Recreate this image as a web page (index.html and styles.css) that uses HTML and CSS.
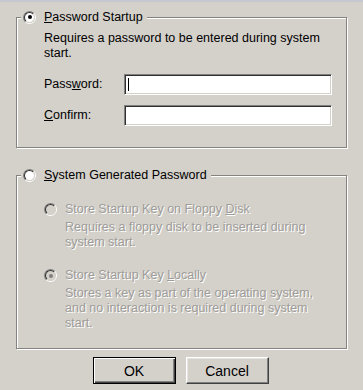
FILE: index.html
```html
<!DOCTYPE html>
<html>
<head>
<meta charset="utf-8">
<link rel="stylesheet" href="styles.css">
</head>
<body>
<div class="topstrip"></div>
<div class="dialog">
  <fieldset class="group g1">
    <legend class="legend">
      <span class="radio checked"><span class="inner"></span></span>
      <span class="ltext"><u>P</u>assword Startup</span>
    </legend>
    <div class="content c1">
      <p class="desc">Requires a password to be entered during system start.</p>
      <div class="row r1">
        <label class="flabel">Pass<u>w</u>ord:</label>
        <div class="input"><span class="caret"></span></div>
      </div>
      <div class="row r2">
        <label class="flabel"><u>C</u>onfirm:</label>
        <div class="input"></div>
      </div>
    </div>
  </fieldset>

  <fieldset class="group g2">
    <legend class="legend">
      <span class="radio"><span class="inner"></span></span>
      <span class="ltext"><u>S</u>ystem Generated Password</span>
    </legend>
    <div class="content c2">
      <div class="option o1">
        <div class="otitle">
          <span class="radio disabled"><span class="inner"></span></span>
          <span class="dis">Store Startup Key on Floppy <u>D</u>isk</span>
        </div>
        <p class="odesc dis">Requires a floppy disk to be inserted during<br>system start.</p>
      </div>
      <div class="option o2">
        <div class="otitle">
          <span class="radio disabled checked"><span class="inner"></span></span>
          <span class="dis">Store Startup Key <u>L</u>ocally</span>
        </div>
        <p class="odesc dis">Stores a key as part of the operating system,<br>and no interaction is required during system<br>start.</p>
      </div>
    </div>
  </fieldset>

  <div class="buttons">
    <button class="btn default">OK</button>
    <button class="btn">Cancel</button>
  </div>
</div>
</body>
</html>
```
FILE: styles.css
```css
html, body {
  margin: 0;
  padding: 0;
  background: #d4d1cb;
  height: 100%;
  overflow: hidden;
}
body {
  font-family: "Liberation Sans", Arial, sans-serif;
  font-size: 12.5px;
  color: #000;
}
.topstrip {
  height: 2px;
  background: #c5c8ce;
}
.dialog {
  padding: 7px 16px 0 16px;
}
.group {
  margin: 0;
  padding: 0;
  min-width: 0;
  border: 1px solid #85837f;
  box-shadow: 1px 1px 0 #fff, inset 1px 1px 0 #fff;
}
.legend {
  display: flex;
  align-items: center;
  margin-left: 4px;
  padding: 0 4px 0 2px;
  height: 16px;
  line-height: 16px;
  background: #d4d1cb;
}
.ltext {
  margin-left: 8px;
}
.radio {
  position: relative;
  display: inline-block;
  width: 13px;
  height: 13px;
  box-sizing: border-box;
  border-radius: 50%;
  border: 1px solid;
  border-color: #808080 #fff #fff #808080;
  flex: none;
}
.radio .inner {
  display: block;
  width: 11px;
  height: 11px;
  box-sizing: border-box;
  border-radius: 50%;
  border: 1px solid;
  border-color: #303030 #d4d1cb #d4d1cb #303030;
  background: #fff;
}
.radio.checked .inner::after {
  content: "";
  position: absolute;
  left: 3.5px;
  top: 3.5px;
  width: 4px;
  height: 4px;
  border-radius: 50%;
  background: #000;
}
.radio.disabled .inner {
  background: #d4d1cb;
}
.radio.disabled.checked .inner::after {
  background: #808080;
}
.content {
  line-height: 15px;
}
.c1 {
  padding: 6px 14px 21px 27px;
}
.desc {
  margin: 0;
  width: 290px;
}
.row {
  display: flex;
  align-items: center;
}
.r1 {
  margin-top: 13px;
}
.r2 {
  margin-top: 10px;
}
.flabel {
  width: 80px;
  flex: none;
}
.input {
  position: relative;
  flex: 1;
  height: 21px;
  box-sizing: border-box;
  background: #fff;
  border: 1px solid;
  border-color: #808080 #fff #fff #808080;
  box-shadow: inset 1px 1px 0 #303030, inset -1px -1px 0 #d4d1cb;
}
.caret {
  position: absolute;
  left: 3px;
  top: 3px;
  width: 1px;
  height: 13px;
  background: #000;
}
.g2 {
  margin-top: 19px;
}
.c2 {
  padding: 19px 14px 17px 27px;
}
.option + .option {
  margin-top: 18px;
}
.otitle {
  display: flex;
  align-items: center;
  height: 15px;
}
.otitle .dis {
  margin-left: 8px;
}
.odesc {
  margin: 3px 0 0 21px;
}
.dis {
  color: #9e9c98;
  text-shadow: 1px 1px 0 #fff;
}
.buttons {
  display: flex;
  justify-content: center;
  gap: 10px;
  margin-top: 8px;
  padding-right: 2px;
}
.btn {
  width: 83px;
  height: 27px;
  box-sizing: border-box;
  font-family: "Liberation Sans", Arial, sans-serif;
  font-size: 14px;
  color: #000;
  background: #d4d1cb;
  border: 1px solid;
  border-color: #fff #404040 #404040 #fff;
  box-shadow: inset -1px -1px 0 #808080, inset 1px 1px 0 #e6e4e0;
  padding: 0;
}
.btn.default {
  border: 1px solid #000;
  box-shadow: inset 1px 1px 0 #fff, inset -1px -1px 0 #404040, inset -2px -2px 0 #808080;
}
```
